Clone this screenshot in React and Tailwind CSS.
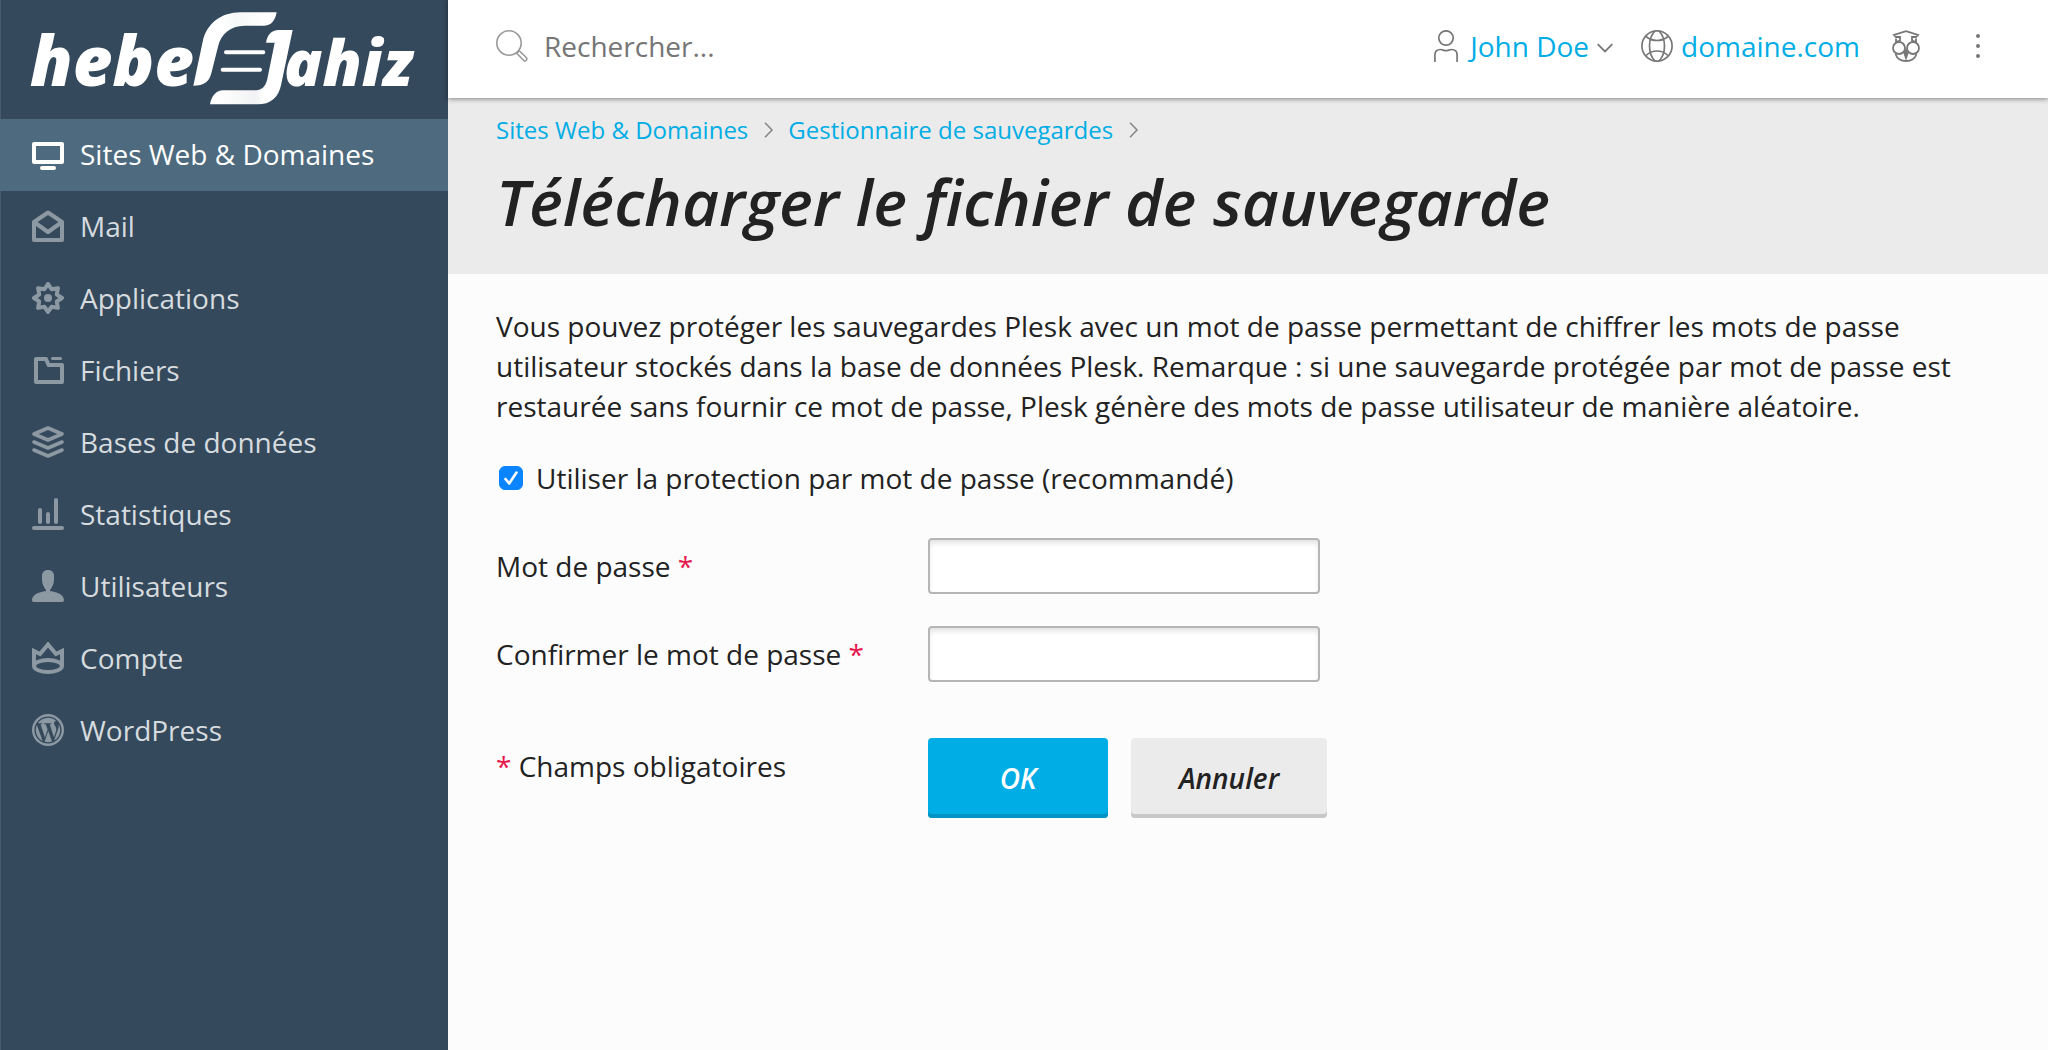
import { useState } from "react";
import { FaWordpressSimple } from "react-icons/fa";

function StrokeIcon({ children, className = "h-8 w-8" }) {
  return (
    <svg
      viewBox="0 0 32 32"
      className={`shrink-0 ${className}`}
      fill="none"
      stroke="currentColor"
      strokeWidth="4"
      strokeLinecap="round"
      strokeLinejoin="round"
      aria-hidden
    >
      {children}
    </svg>
  );
}

function MonitorIcon() {
  return (
    <StrokeIcon>
      <path d="M2 6h28v18H2zM10 30h12" />
    </StrokeIcon>
  );
}

function MailIcon() {
  return (
    <StrokeIcon>
      <path d="M2 12 16 2.500 30 12v18H2zM2 12l14 10 14-10" />
    </StrokeIcon>
  );
}

function GearIcon() {
  return (
    <StrokeIcon>
      <path d="M16 2 19.500 7.200 25.900 6.100 24.800 12.500 30 16 24.800 19.500 25.900 25.900 19.500 24.800 16 30 12.500 24.800 6.100 25.900 7.200 19.500 2 16 7.200 12.500 6.100 6.100 12.500 7.200Z" />
      <circle cx="16" cy="16" r="4" fill="currentColor" stroke="none" />
    </StrokeIcon>
  );
}

function FolderIcon() {
  return (
    <StrokeIcon>
      <path d="M4 5h10l2.500 6H30v17H4z" />
      <path d="M20.500 4.500h8" strokeWidth="3" />
    </StrokeIcon>
  );
}

function LayersIcon() {
  return (
    <StrokeIcon>
      <path d="M16 2 30 8l-14 6L2 8zM2 16l14 6 14-6M2 24l14 6 14-6" strokeWidth="3.600" />
    </StrokeIcon>
  );
}

function StatsIcon() {
  return (
    <StrokeIcon>
      <path d="M2 30h28M8 12v12M16 16v8M24 2v22" />
    </StrokeIcon>
  );
}

function UserIcon() {
  return (
    <StrokeIcon>
      <path
        d="M16 0c4 0 6 2.500 6 6v4c0 4-2 7.500-4 10v1c8 1 14 4 14 9 0 1-.5 2-2 2H2c-1.500 0-2-1-2-2 0-5 6-8 14-9v-1c-2-2.500-4-6-4-10V6c0-3.500 2-6 6-6z"
        fill="currentColor"
        stroke="none"
      />
    </StrokeIcon>
  );
}

function CrownIcon() {
  return (
    <StrokeIcon>
      <path d="M2 24V9l6 3 8-9.500 8 9.500 6-3v15" strokeLinecap="butt" strokeLinejoin="miter" />
      <ellipse cx="16" cy="24" rx="14" ry="6" />
    </StrokeIcon>
  );
}

function WordPressIcon() {
  return (
    <span className="flex h-8 w-8 shrink-0 items-center justify-center rounded-full bg-[#8c98a2]">
      <FaWordpressSimple className="h-7 w-7 text-[#34495c]" />
    </span>
  );
}

const MENU = [
  { label: "Sites Web & Domaines", icon: MonitorIcon, active: true },
  { label: "Mail", icon: MailIcon },
  { label: "Applications", icon: GearIcon },
  { label: "Fichiers", icon: FolderIcon },
  { label: "Bases de données", icon: LayersIcon },
  { label: "Statistiques", icon: StatsIcon },
  { label: "Utilisateurs", icon: UserIcon },
  { label: "Compte", icon: CrownIcon },
  { label: "WordPress", icon: WordPressIcon },
];

const BREADCRUMBS = ["Sites Web & Domaines", "Gestionnaire de sauvegardes"];

function Logo() {
  return (
    <svg viewBox="0 0 1200 315" className="w-[400px]" fill="#fff" role="img" aria-label="hebergjahiz">
      <defs>
        <linearGradient id="ribbonTop" x1="0" x2="1">
          <stop offset="0.35" stopColor="#fff" />
          <stop offset="0.5" stopColor="#f6f7f7" />
          <stop offset="0.9" stopColor="#fff" />
        </linearGradient>
        <linearGradient id="ribbonBottom" x1="0" x2="1">
          <stop offset="0.1" stopColor="#fff" />
          <stop offset="0.55" stopColor="#f1f2f3" />
          <stop offset="0.65" stopColor="#fff" />
        </linearGradient>
      </defs>
      <g fontFamily="'Open Sans', sans-serif" fontWeight="800" fontStyle="italic">
        <text x="18" y="243" fontSize="206">hebe</text>
        <text x="780" y="243" fontSize="190">ahiz</text>
      </g>
      <path
        d="M508 242 536 110C548 55 592 22 650 22H758C754 45 742 62 722 62H662C618 62 590 88 582 125L562 205C555 232 540 242 508 242Z"
        fill="url(#ribbonTop)"
      />
      <path
        d="M764 75H806L772 236C764 278 740 298 700 298H558C562 274 576 256 598 256H690C714 256 724 246 730 222L752 113H726C730 90 742 75 764 75Z"
        fill="url(#ribbonBottom)"
      />
      <path d="M606 142H718M596 194H708" stroke="#fff" strokeWidth="12" strokeLinecap="round" />
    </svg>
  );
}

function Sidebar() {
  return (
    <aside className="w-112 shrink-0 bg-[#34495c] shadow-[inset_1px_0_0_#485b6c]">
      <a href="#accueil" className="flex h-[119px] items-center pb-1 pl-6">
        <Logo />
      </a>
      <nav>
        {MENU.map(({ label, icon: Icon, active }) => (
          <a
            key={label}
            href="#menu"
            className={`flex h-18 items-center gap-4 px-8 pb-0.5 ${
              active ? "bg-[#4d6a7e] text-white" : "text-[#8c98a2]"
            }`}
          >
            <Icon />
            <span className={active ? "text-white" : "text-[#d6dbdf]"}>{label}</span>
          </a>
        ))}
      </nav>
    </aside>
  );
}

function TopBar() {
  return (
    <header className="relative z-10 flex h-[98px] items-center justify-between bg-white pr-17 pb-1.5 pl-12 text-[#777] shadow-[0_1px_5px_rgba(0,0,0,0.45)]">
      <label className="flex items-center gap-4">
        <svg viewBox="0 0 32 32" className="h-8 w-8 text-[#999]" fill="none" stroke="currentColor" strokeWidth="1.600" aria-hidden>
          <circle cx="13" cy="13" r="12.200" />
          <path d="M20.500 23.500 23.500 20.500M20.700 23.300 27.500 30.300a1.900 1.900 0 0 0 2.800-2.800L23.300 20.700" />
        </svg>
        <input
          type="search"
          aria-label="Rechercher"
          placeholder="Rechercher..."
          className="w-80 outline-none placeholder:text-[#757575]"
        />
      </label>

      <div className="flex items-center">
        <button type="button" className="flex items-center gap-3">
          <svg viewBox="0 0 24 32" className="h-8 w-6" fill="none" stroke="currentColor" strokeWidth="1.700" aria-hidden>
            <circle cx="12" cy="8" r="7.200" />
            <path d="M.9 32v-7c0-3.500 2-5.500 5.600-5.500 2 0 3.500 1.200 5.500 1.200s3.500-1.200 5.500-1.200c3.600 0 5.600 2 5.600 5.500v7" />
          </svg>
          <span className="flex items-center gap-2 text-[#00ade5]">
            John Doe
            <svg viewBox="0 0 16 10" className="mt-1 h-[10px] w-4 text-[#777]" fill="none" stroke="currentColor" strokeWidth="1.800" aria-hidden>
              <path d="M.7 1.200 8 8.500l7.300-7.300" />
            </svg>
          </span>
        </button>

        <a href="#domaine" className="ml-7 flex items-center gap-2 text-[#00ade5]">
          <svg viewBox="0 0 32 32" className="h-8 w-8 text-[#777]" fill="none" stroke="currentColor" strokeWidth="1.700" aria-hidden>
            <circle cx="16" cy="16" r="15.100" />
            <path d="M14 1C10 5 8.500 10 8.500 16S10 27 14 31M18 1c4 4 5.500 9 5.500 15S22 27 18 31M5 6.500c3 2.500 6.500 4 11 4s8-1.500 11-4M5 25.500c3-3 6.500-4.500 11-4.500s8 1.500 11 4.500" />
          </svg>
          domaine.com
        </a>

        <button type="button" aria-label="Conseiller" className="ml-8">
          <svg viewBox="0 0 28 32" className="h-8 w-7" fill="none" stroke="currentColor" strokeWidth="1.800" aria-hidden>
            <path d="M4.500 7.500 2 5l12-3.800L26 5l-2.500 2.500M4.500 7H8v3.500l-4 1.500V8.500M23.500 7H20v3.500l4 1.500V8.500" />
            <circle cx="7" cy="18" r="6" />
            <circle cx="21" cy="18" r="6" />
            <path d="M3.500 24C5 28.500 9 31 14 31s9-2.500 10.500-7" />
            <path d="m12.300 23 1.700 5 1.700-5L14 20z" fill="currentColor" />
          </svg>
        </button>

        <button type="button" aria-label="Plus d'options" className="ml-14">
          <svg viewBox="0 0 4 24" className="h-6 w-1" fill="currentColor" aria-hidden>
            <circle cx="2" cy="2" r="2" />
            <circle cx="2" cy="12" r="2" />
            <circle cx="2" cy="22" r="2" />
          </svg>
        </button>
      </div>
    </header>
  );
}

function PageHeading() {
  return (
    <div className="bg-[#ebebeb] px-12 pt-4 pb-8">
      <nav className="flex items-center text-2xl leading-8 text-[#00ade5]">
        {BREADCRUMBS.map((crumb) => (
          <span key={crumb} className="flex items-center">
            <a href="#fil">{crumb}</a>
            <svg viewBox="0 0 10 16" className="mr-3.5 ml-4 h-4 w-[10px] text-[#888]" fill="none" stroke="currentColor" strokeWidth="1.600" aria-hidden>
              <path d="m1 .7 7 7.300-7 7.300" />
            </svg>
          </span>
        ))}
      </nav>
      <h1 className="mt-4 text-[64px] leading-20 font-semibold italic">
        Télécharger le fichier de sauvegarde
      </h1>
    </div>
  );
}

function Required() {
  return <span className="text-[#e6194f]">*</span>;
}

function PasswordField({ id, label }) {
  return (
    <div className="flex items-center">
      <label htmlFor={id} className="w-108 shrink-0">
        {label} <Required />
      </label>
      <input
        id={id}
        type="password"
        className="h-14 w-98 rounded border-2 border-[#b5b5b5] bg-white px-3 shadow-[inset_0_4px_6px_-2px_rgba(0,0,0,0.15)] outline-none"
      />
    </div>
  );
}

function BackupForm() {
  const [isProtected, setIsProtected] = useState(true);

  return (
    <form className="flex flex-col gap-8 px-12 py-8" onSubmit={(event) => event.preventDefault()}>
      <p>
        Vous pouvez protéger les sauvegardes Plesk avec un mot de passe permettant de chiffrer les mots de passe
        utilisateur stockés dans la base de données Plesk. Remarque : si une sauvegarde protégée par mot de passe est
        restaurée sans fournir ce mot de passe, Plesk génère des mots de passe utilisateur de manière aléatoire.
      </p>

      <label className="mb-2 flex items-center gap-[13px] pl-[3px]">
        <span className="relative flex">
          <input
            type="checkbox"
            checked={isProtected}
            onChange={(event) => setIsProtected(event.target.checked)}
            className="h-6 w-6 appearance-none rounded-md border border-[#b5b5b5] bg-white checked:border-[#0a84ff] checked:bg-[#0a84ff]"
          />
          {isProtected && (
            <svg
              viewBox="0 0 24 24"
              className="pointer-events-none absolute inset-0 h-6 w-6"
              fill="none"
              stroke="#fff"
              strokeWidth="2.600"
              strokeLinecap="round"
              strokeLinejoin="round"
              aria-hidden
            >
              <path d="m6.500 13 3.700 4.500L17.500 6.500" />
            </svg>
          )}
        </span>
        Utiliser la protection par mot de passe (recommandé)
      </label>

      <PasswordField id="password" label="Mot de passe" />
      <PasswordField id="password-confirm" label="Confirmer le mot de passe" />

      <div className="mt-6 flex items-start">
        <p className="w-108 shrink-0 pt-2">
          <Required /> Champs obligatoires
        </p>
        <div className="flex gap-[23px] font-semibold italic">
          <button type="submit" className="h-20 w-45 rounded bg-[#00ade5] text-white shadow-[inset_0_-4px_0_#0093c3]">
            OK
          </button>
          <button type="button" className="h-20 w-49 rounded bg-[#ebebeb] shadow-[inset_0_-4px_0_#c8c8c8]">
            Annuler
          </button>
        </div>
      </div>
    </form>
  );
}

export default function App() {
  return (
    <div className="flex min-h-screen bg-[#fcfcfc] font-['Open_Sans',sans-serif] text-[28px] leading-10 text-[#222]">
      <Sidebar />
      <main className="min-w-0 flex-1">
        <TopBar />
        <PageHeading />
        <BackupForm />
      </main>
    </div>
  );
}
